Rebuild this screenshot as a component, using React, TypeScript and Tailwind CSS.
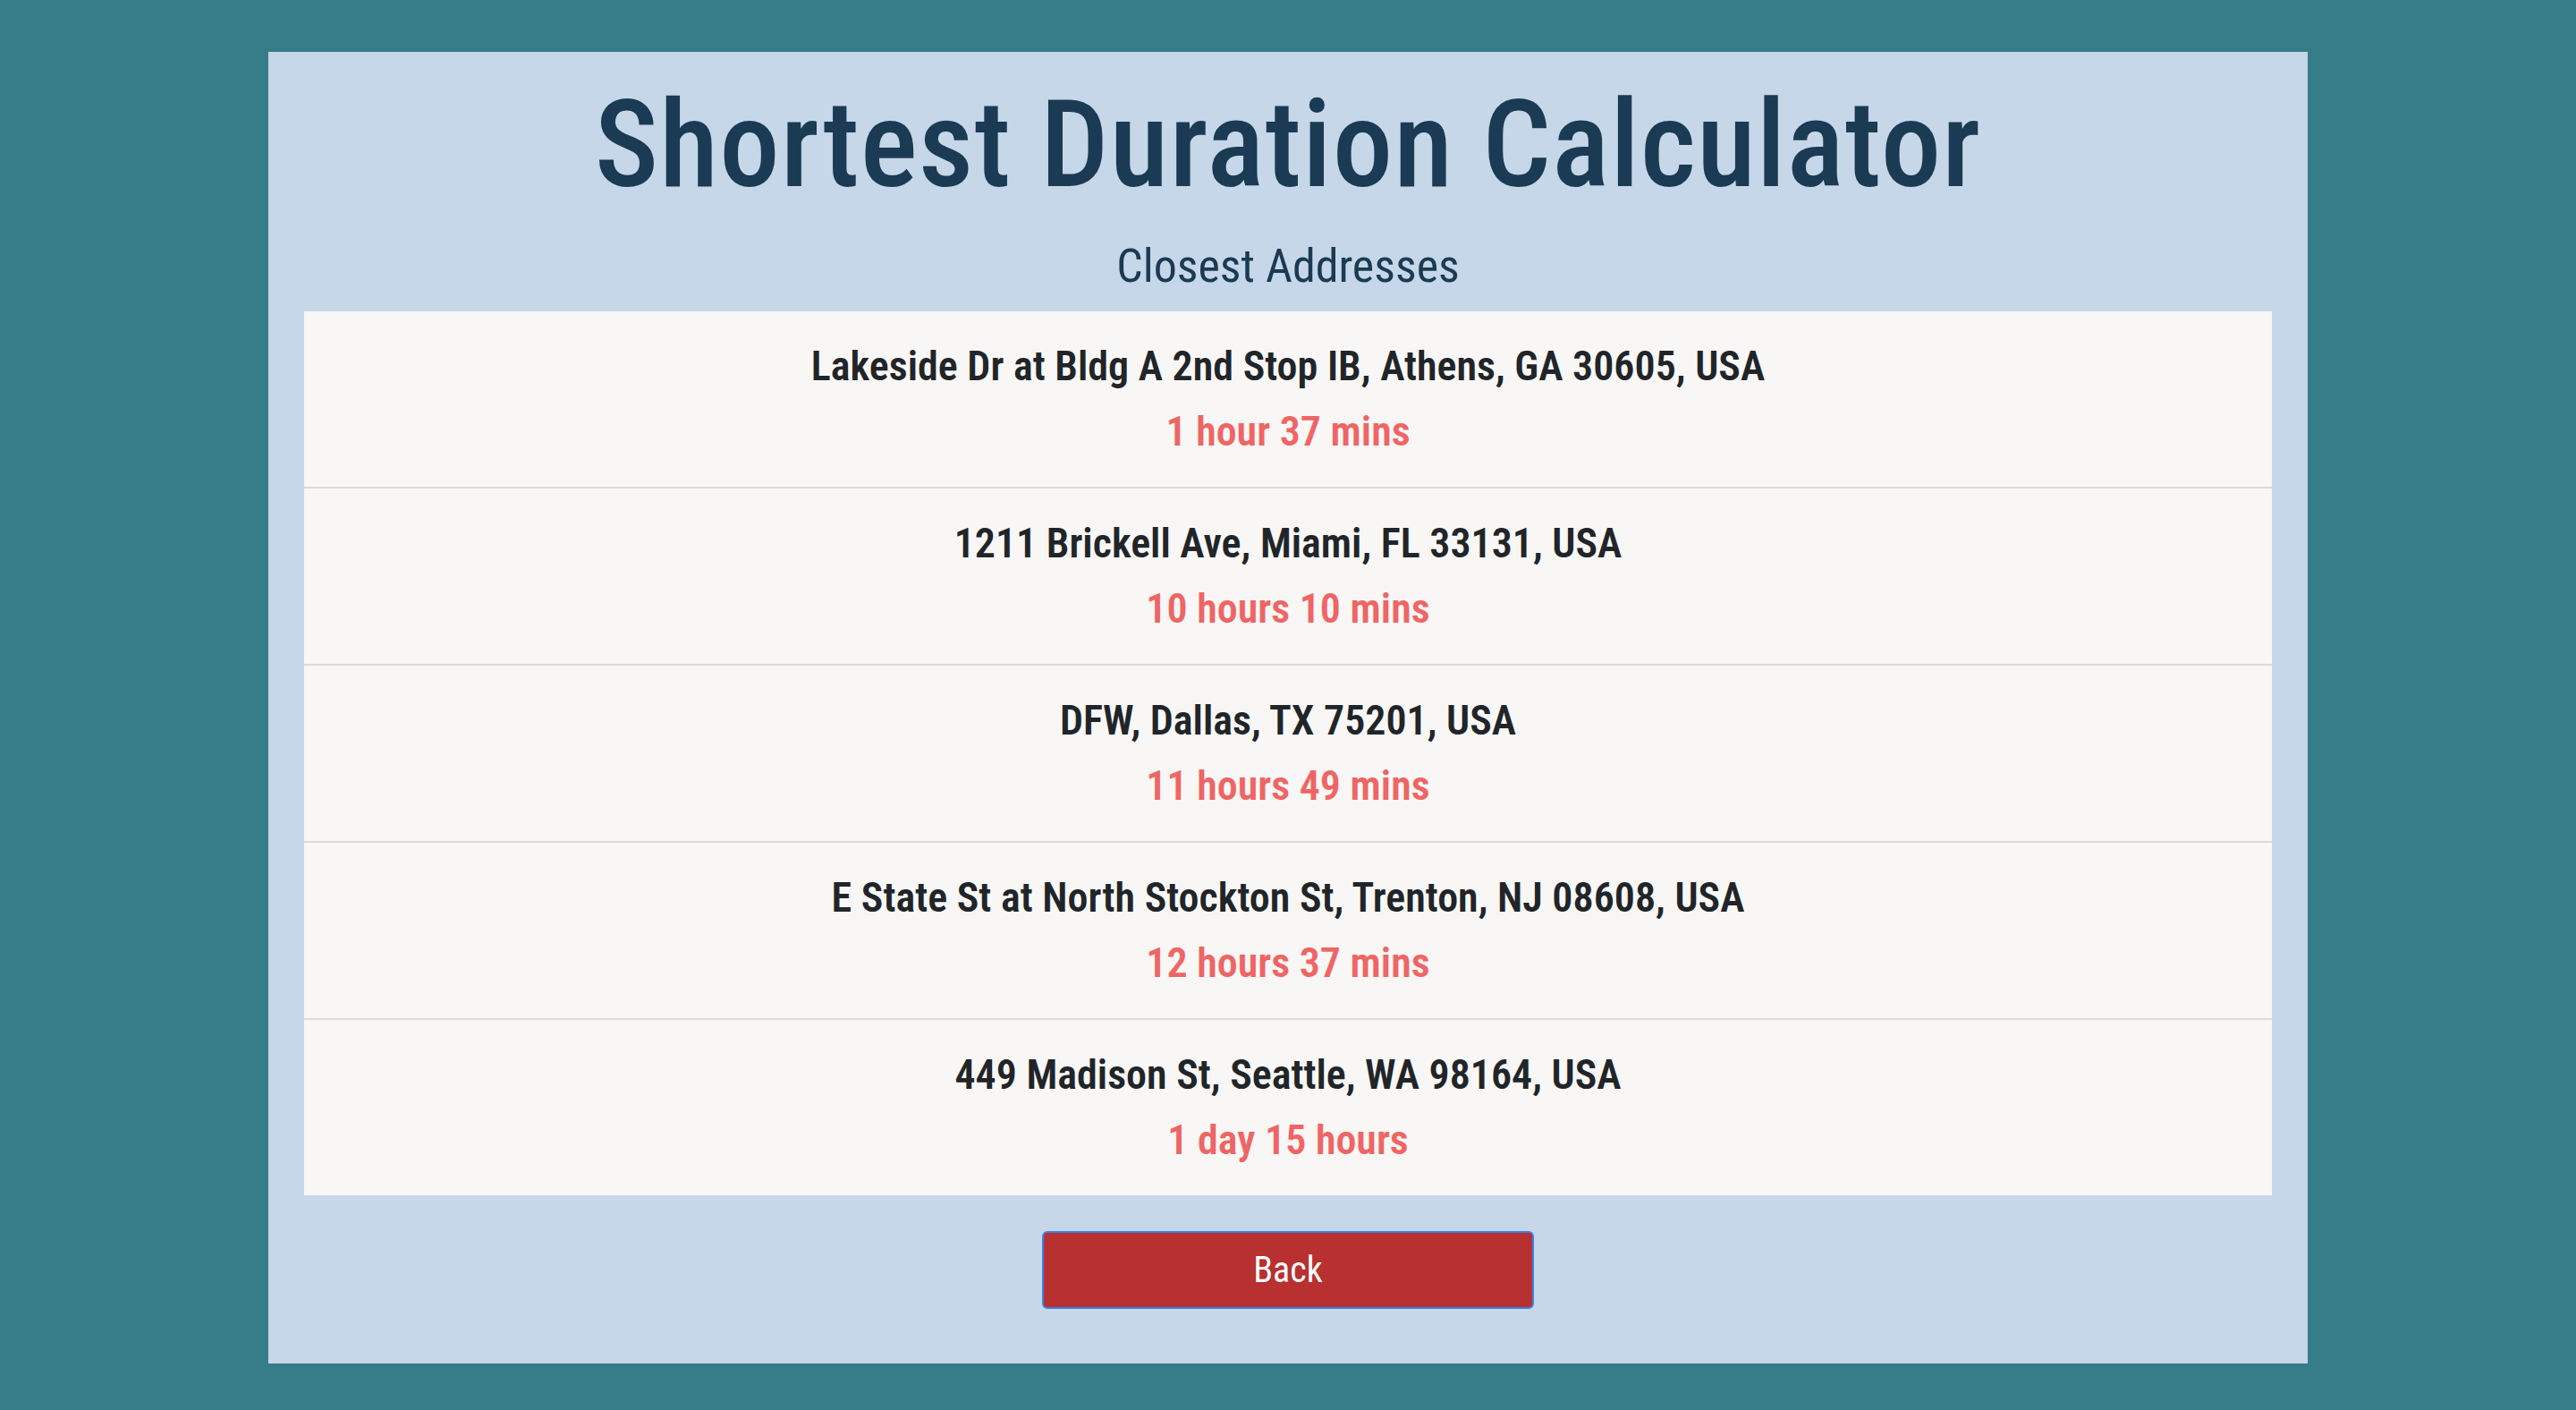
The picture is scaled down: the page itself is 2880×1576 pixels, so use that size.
const results = [
  { address: 'Lakeside Dr at Bldg A 2nd Stop IB, Athens, GA 30605, USA', duration: '1 hour 37 mins' },
  { address: '1211 Brickell Ave, Miami, FL 33131, USA', duration: '10 hours 10 mins' },
  { address: 'DFW, Dallas, TX 75201, USA', duration: '11 hours 49 mins' },
  { address: 'E State St at North Stockton St, Trenton, NJ 08608, USA', duration: '12 hours 37 mins' },
  { address: '449 Madison St, Seattle, WA 98164, USA', duration: '1 day 15 hours' },
]

export default function App() {
  return (
    <div className="min-h-screen bg-[#377d89] pt-[58px] font-['Roboto',sans-serif] [font-stretch:75%]">
      <div className="mx-auto w-[2280px] bg-[#c5d7e8] px-[40px] pb-[61px] text-center">
        <h1 className="pt-[23px] text-[135px] leading-[162px] font-medium tracking-[1px] text-[#1b3a53]">
          Shortest Duration Calculator
        </h1>
        <h2 className="mt-[23px] text-[52px] leading-[64px] font-normal text-[#1b3a53]">Closest Addresses</h2>
        <ul className="mt-[18px] bg-[#f8f7f5]">
          {results.map((r, i) => (
            <li
              key={r.address}
              className={`px-4 pt-[34px] pb-[34px] ${i < results.length - 1 ? 'border-b-2 border-[#dcdbd8]' : ''}`}
            >
              <div className="text-[46px] leading-[55px] font-semibold text-[#212529]">{r.address}</div>
              <div className="mt-[18px] text-[46px] leading-[55px] font-semibold text-[#ef6565]">{r.duration}</div>
            </li>
          ))}
        </ul>
        <button
          type="button"
          className="mt-[40px] h-[87px] w-[550px] rounded-md border-2 border-[#3b7fe8] bg-[#b83030] text-[40px] text-white"
        >
          Back
        </button>
      </div>
    </div>
  )
}
